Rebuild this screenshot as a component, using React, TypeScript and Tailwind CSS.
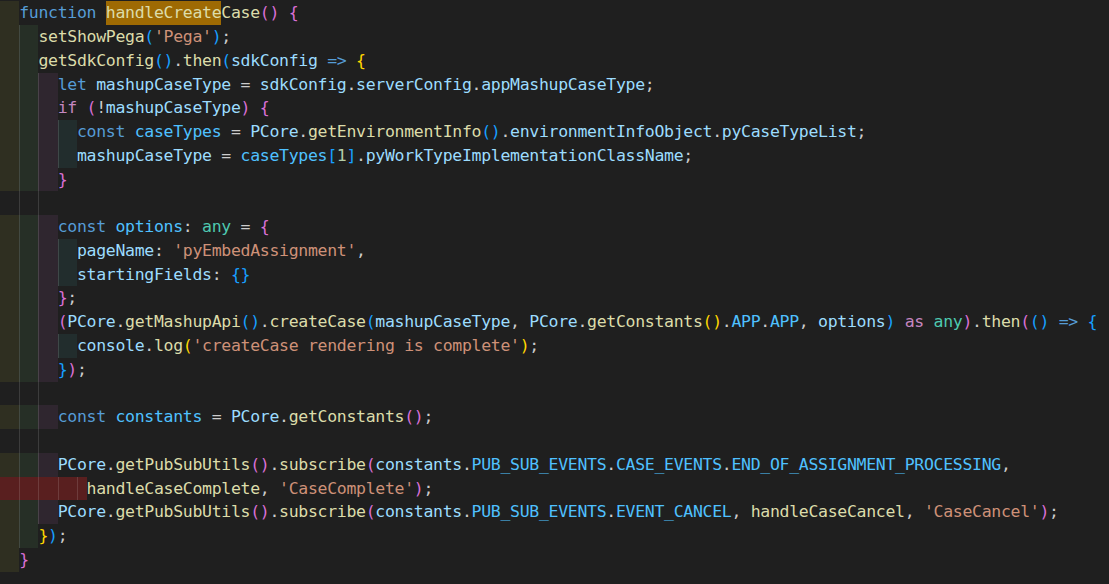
import React from "react";

type Tok = [string, string, boolean?];

const K = "#569cd6";
const C = "#c586c0";
const F = "#dcdcaa";
const V = "#9cdcfe";
const N = "#4fc1ff";
const T = "#4ec9b0";
const S = "#ce9178";
const P = "#cccccc";
const NUM = "#b5cea8";
const B1 = "#da70d6";
const B2 = "#179fff";
const B3 = "#ffd700";

type Line = { indent: number; toks: Tok[]; empty?: number };

const lines: Line[] = [
  { indent: 2, toks: [["function", K], [" ", P], ["handleCreate", F, true], ["Case", F], ["()", B1], [" ", P], ["{", B1]] },
  { indent: 4, toks: [["setShowPega", F], ["(", B2], ["'Pega'", S], [")", B2], [";", P]] },
  { indent: 4, toks: [["getSdkConfig", F], ["()", B2], [".", P], ["then", F], ["(", B2], ["sdkConfig", V], [" ", P], ["=>", K], [" ", P], ["{", B3]] },
  { indent: 6, toks: [["let", K], [" ", P], ["mashupCaseType", V], [" = ", P], ["sdkConfig", V], [".", P], ["serverConfig", V], [".", P], ["appMashupCaseType", V], [";", P]] },
  { indent: 6, toks: [["if", C], [" ", P], ["(", B1], ["!", P], ["mashupCaseType", V], [")", B1], [" ", P], ["{", B1]] },
  { indent: 8, toks: [["const", K], [" ", P], ["caseTypes", N], [" = ", P], ["PCore", V], [".", P], ["getEnvironmentInfo", F], ["()", B2], [".", P], ["environmentInfoObject", V], [".", P], ["pyCaseTypeList", V], [";", P]] },
  { indent: 8, toks: [["mashupCaseType", V], [" = ", P], ["caseTypes", N], ["[", B2], ["1", NUM], ["]", B2], [".", P], ["pyWorkTypeImplementationClassName", V], [";", P]] },
  { indent: 6, toks: [["}", B1]] },
  { indent: 0, toks: [], empty: 3 },
  { indent: 6, toks: [["const", K], [" ", P], ["options", N], [": ", P], ["any", T], [" = ", P], ["{", B1]] },
  { indent: 8, toks: [["pageName", V], [": ", P], ["'pyEmbedAssignment'", S], [",", P]] },
  { indent: 8, toks: [["startingFields", V], [": ", P], ["{}", B2]] },
  { indent: 6, toks: [["}", B1], [";", P]] },
  {
    indent: 6,
    toks: [
      ["(", B1], ["PCore", V], [".", P], ["getMashupApi", F], ["()", B2], [".", P], ["createCase", F], ["(", B2],
      ["mashupCaseType", V], [", ", P], ["PCore", V], [".", P], ["getConstants", F], ["()", B3], [".", P],
      ["APP", N], [".", P], ["APP", N], [", ", P], ["options", V], [")", B2], [" ", P], ["as", C], [" ", P],
      ["any", T], [")", B1], [".", P], ["then", F], ["(", B1], ["()", B2], [" ", P], ["=>", K], [" ", P], ["{", B2],
    ],
  },
  { indent: 8, toks: [["console", V], [".", P], ["log", F], ["(", B3], ["'createCase rendering is complete'", S], [")", B3], [";", P]] },
  { indent: 6, toks: [["}", B2], [")", B1], [";", P]] },
  { indent: 0, toks: [], empty: 3 },
  { indent: 6, toks: [["const", K], [" ", P], ["constants", N], [" = ", P], ["PCore", V], [".", P], ["getConstants", F], ["()", B1], [";", P]] },
  { indent: 0, toks: [], empty: 3 },
  {
    indent: 6,
    toks: [
      ["PCore", V], [".", P], ["getPubSubUtils", F], ["()", B1], [".", P], ["subscribe", F], ["(", B1],
      ["constants", V], [".", P], ["PUB_SUB_EVENTS", N], [".", P], ["CASE_EVENTS", N], [".", P],
      ["END_OF_ASSIGNMENT_PROCESSING", N], [",", P],
    ],
  },
  { indent: 9, toks: [["handleCaseComplete", F], [", ", P], ["'CaseComplete'", S], [")", B1], [";", P]] },
  {
    indent: 6,
    toks: [
      ["PCore", V], [".", P], ["getPubSubUtils", F], ["()", B1], [".", P], ["subscribe", F], ["(", B1],
      ["constants", V], [".", P], ["PUB_SUB_EVENTS", N], [".", P], ["EVENT_CANCEL", N], [", ", P],
      ["handleCaseCancel", F], [", ", P], ["'CaseCancel'", S], [")", B1], [";", P],
    ],
  },
  { indent: 4, toks: [["}", B3], [")", B2], [";", P]] },
  { indent: 2, toks: [["}", B1]] },
];

const bandBg = ["bg-[#2f2f21]", "bg-[#262f26]", "bg-[#2f262f]", "bg-[#222d2d]"];
const GUIDE = "shadow-[inset_1px_0_0_rgba(255,255,255,0.13)]";

function Indent({ line }: { line: Line }) {
  const segs: React.ReactNode[] = [];
  if (line.empty) {
    for (let i = 0; i < line.empty; i++) {
      segs.push(<span key={i} className={`w-[19.24px] shrink-0 ${i > 0 ? GUIDE : ""}`} />);
    }
    return <>{segs}</>;
  }
  const n = line.indent;
  const odd = n % 2 === 1;
  const pairs = Math.floor(n / 2);
  for (let i = 0; i < pairs; i++) {
    const bg = odd ? "bg-[#591f1f]" : bandBg[i % 4];
    segs.push(<span key={i} className={`w-[19.24px] shrink-0 ${bg} ${i > 0 ? GUIDE : ""}`} />);
  }
  if (odd) {
    segs.push(<span key="r" className={`w-[9.62px] shrink-0 bg-[#591f1f] ${GUIDE}`} />);
  }
  return <>{segs}</>;
}

export default function App() {
  return (
    <div
      className="w-[1109px] h-[584px] bg-[#1f1f1f] overflow-hidden pt-[1.3px] text-[16.5px] tracking-[-0.31px]"
      style={{ fontFamily: '"DejaVu Sans Mono", "Liberation Mono", monospace' }}
    >
      {lines.map((line, i) => (
        <div key={i} className="flex h-[23.77px] leading-[23.77px] whitespace-pre">
          <Indent line={line} />
          {line.toks.map((t, j) => (
            <span
              key={j}
              className={t[2] ? "bg-[#9e6a03]" : ""}
              style={{ color: t[1] }}
            >
              {t[0]}
            </span>
          ))}
        </div>
      ))}
    </div>
  );
}
